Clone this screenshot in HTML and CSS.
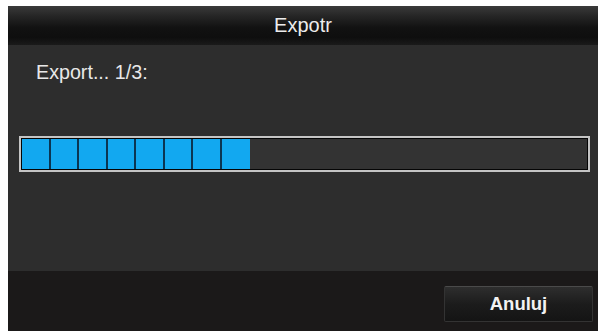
FILE: index.html
```html
<!DOCTYPE html>
<html>
<head>
<meta charset="utf-8">
<link rel="stylesheet" href="styles.css">
</head>
<body>
<div class="dialog">
  <div class="header">Expotr</div>
  <div class="content">
    <div class="label">Export... 1/3:</div>
    <div class="progress">
      <div class="track">
        <div class="seg"></div><div class="seg"></div><div class="seg"></div><div class="seg"></div>
        <div class="seg"></div><div class="seg"></div><div class="seg"></div><div class="seg last"></div>
      </div>
    </div>
  </div>
  <div class="footer">
    <button class="btn">Anuluj</button>
  </div>
</div>
</body>
</html>
```
FILE: styles.css
```css
html, body {
  margin: 0;
  padding: 0;
  background: #ffffff;
  font-family: "Liberation Sans", Arial, sans-serif;
}
body {
  padding: 6px 0 0 8px;
  height: 331px;
  box-sizing: border-box;
  overflow: hidden;
}
.dialog {
  width: 590px;
  height: 325px;
  display: flex;
  flex-direction: column;
}
.header {
  height: 39px;
  flex: none;
  background: linear-gradient(to bottom, #3a3a3a 0%, #262626 25%, #121212 55%, #0e0e0e 80%, #1a1a1a 100%);
  color: #ececec;
  font-size: 20px;
  text-align: center;
  line-height: 38px;
}
.content {
  flex: none;
  height: 226px;
  background: #2d2d2d;
  display: flex;
  flex-direction: column;
}
.label {
  color: #e8e8e8;
  font-size: 19.7px;
  padding: 16px 0 0 28px;
  line-height: 22px;
}
.progress {
  margin: 53px 0 0 11px;
  width: 571px;
  height: 36px;
  box-sizing: border-box;
  border: 2px solid #c4c4c4;
}
.track {
  height: 100%;
  box-sizing: border-box;
  border: 1px solid #050505;
  background: #333333;
  display: flex;
}
.seg {
  width: 28.5px;
  height: 100%;
  box-sizing: border-box;
  background: #12a8f0;
  border-right: 2px solid #0b3552;
}
.seg.last {
  border-right: none;
}
.footer {
  flex: 1;
  background: #1b1919;
  display: flex;
  justify-content: flex-end;
  align-items: flex-start;
  padding: 15px 5px 0 0;
}
.btn {
  width: 149px;
  height: 36px;
  background: linear-gradient(to bottom, #2e2e2e 0%, #1c1c1c 50%, #141414 100%);
  border: 1px solid #333;
  border-top-color: #4a4a4a;
  border-radius: 2px;
  color: #f2f2f2;
  font-family: "Liberation Sans", Arial, sans-serif;
  font-size: 18.5px;
  font-weight: bold;
  padding: 0;
}
```
